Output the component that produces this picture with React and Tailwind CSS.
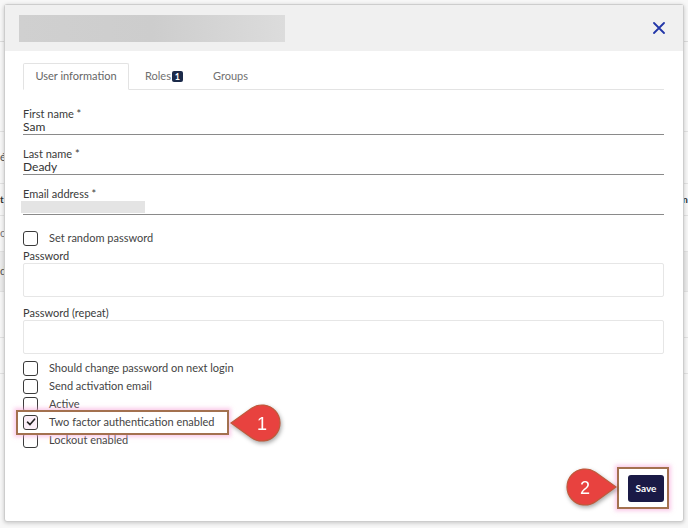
import { useState } from "react";

const font = { fontFamily: "Lato, 'Open Sans', sans-serif" };

const Field = ({ label, value, blurred }) => (
	<div className="flex flex-col h-[28px] border-b border-[#8a8a8a]">
		<span className="text-[11px] leading-[13px] text-[#3a3a3a]">{label}</span>
		{blurred ? (
			<div className="mt-[1px] -ml-[2px] h-[12px] w-[124px] bg-[#e4e4e4]" />
		) : (
			<span className="text-[12px] leading-[14px] text-[#333]">{value}</span>
		)}
	</div>
);

const Check = ({ label, checked }) => (
	<div className="flex items-center h-[18px]">
		<div className={`flex items-center justify-center w-[15px] h-[15px] rounded-[3px] border-[1.5px] border-[#3a3a3a] shrink-0 ${checked ? "bg-[#fbeef8]" : "bg-white"}`}>
			{checked && (
				<svg width="10" height="10" viewBox="0 0 10 10">
					<path d="M1.5 5.2 L4 7.6 L8.6 2.2" fill="none" stroke="#222" strokeWidth="1.6" strokeLinecap="round" strokeLinejoin="round" />
				</svg>
			)}
		</div>
		<span className="ml-[11px] text-[11px] text-[#444]">{label}</span>
	</div>
);

const Callout = ({ n, dir }) => (
	<svg width="72" height="44" viewBox="-36 -22 72 44" className="drop-shadow-[1px_2px_2px_rgba(0,0,0,0.35)]">
		{dir === "left" ? (
			<path d="M-31 0 L-10.45 -14.65 A18 18 0 1 1 -10.45 14.65 Z" fill="#e8423f" stroke="#c0593b" strokeWidth="1.2" />
		) : (
			<path d="M31 0 L10.45 -14.65 A18 18 0 1 0 10.45 14.65 Z" fill="#e8423f" stroke="#c0593b" strokeWidth="1.2" />
		)}
		<text x="0" y="6.5" textAnchor="middle" fontSize="18" fill="#fff" style={{ fontFamily: "'Liberation Sans', Arial, sans-serif" }}>{n}</text>
	</svg>
);

export default function App() {
	const [tab] = useState("info");

	return (
		<div className="relative w-[688px] h-[528px] overflow-hidden bg-[#f7f7f7]" style={font}>
			{/* background page */}
			<div className="flex flex-col">
				<div className="h-[42px] border-b border-[#dcdcdc]" />
				<div className="h-[90px] border-b border-[#e2e2e2]" />
				<div className="h-[52px] border-b border-[#e2e2e2] flex items-center justify-between text-[11px] text-[#555]"><span>é</span></div>
				<div className="h-[32px] border-b border-[#e2e2e2] flex items-center justify-between text-[10px] font-bold text-[#333]"><span>t</span><span>m</span></div>
				<div className="h-[36px] border-b border-[#e2e2e2] flex items-center text-[11px] text-[#777]"><span>c</span></div>
				<div className="h-[40px] border-b border-[#e2e2e2] bg-[#ececec] flex items-center text-[11px] text-[#555]"><span>d</span></div>
				<div className="h-[46px] border-b border-[#e2e2e2]" />
				<div className="h-[36px] border-b border-[#e2e2e2]" />
			</div>

			{/* modal */}
			<div className="absolute left-[4px] top-[4px] w-[680px] h-[518px] flex flex-col bg-white border border-[#cdcdcd] rounded-[3px] shadow-[0_1px_4px_rgba(0,0,0,0.2)]">
				<div className="h-[46px] shrink-0 bg-[#f0f0f0] flex items-center justify-between pl-[14px] pr-[18px]">
					<div className="h-[27px] w-[266px] bg-gradient-to-r from-[#d0d0d0] via-[#cdcdcd] to-[#dcdcdc]" />
					<svg width="12" height="12" viewBox="0 0 12 12">
						<path d="M1 1 L11 11 M11 1 L1 11" stroke="#2236a8" strokeWidth="1.8" strokeLinecap="round" />
					</svg>
				</div>

				<div className="flex flex-col flex-1 pl-[18px] pr-[19px] pt-[12px]">
					<div className="flex items-end h-[27px] border-b border-[#e3e3e3] text-[11px] text-[#707070]">
						<div className={`h-[27px] w-[106px] flex items-center justify-center -mb-[1px] bg-white border border-[#e3e3e3] border-b-white rounded-t-[2px] ${tab === "info" ? "text-[#666]" : ""}`}>User information</div>
						<div className="h-[26px] flex items-center ml-[16px]">
							<span>Roles</span>
							<span className="ml-[1px] w-[11px] h-[11px] rounded-[2px] bg-[#1b2a4a] text-white text-[9px] font-bold leading-[11px] text-center">1</span>
						</div>
						<div className="h-[26px] flex items-center ml-[30px]">Groups</div>
					</div>

					<div className="flex flex-col gap-[12px] mt-[17px]">
						<Field label="First name *" value="Sam" />
						<Field label="Last name *" value="Deady" />
						<Field label="Email address *" blurred />
					</div>

					<div className="mt-[14px]">
						<Check label="Set random password" />
					</div>

					<span className="mt-[2px] text-[11px] leading-[13px] text-[#3a3a3a]">Password</span>
					<div className="mt-[1px] h-[34px] border border-[#e6e6e6] rounded-[2px]" />
					<span className="mt-[9px] text-[11px] leading-[13px] text-[#3a3a3a]">Password (repeat)</span>
					<div className="mt-[1px] h-[34px] border border-[#e6e6e6] rounded-[2px]" />

					<div className="mt-[5px] flex flex-col">
						<Check label="Should change password on next login" />
						<Check label="Send activation email" />
						<Check label="Active" />
						<Check label="Two factor authentication enabled" checked />
						<Check label="Lockout enabled" />
					</div>

					<div className="mt-auto mb-[19px] flex justify-end">
						<button className="w-[36px] h-[27px] rounded-[3px] bg-[#1a1a46] text-white text-[10px] font-bold">Save</button>
					</div>
				</div>
			</div>

			{/* annotations */}
			<div className="absolute left-[16px] top-[410px] w-[213px] h-[25px] border-2 border-[#a3714f] shadow-[0_0_4px_2px_rgba(245,160,215,0.55)]" />
			<div className="absolute left-[226px] top-[401px]">
				<Callout n="1" dir="left" />
			</div>
			<div className="absolute left-[617px] top-[467px] w-[52px] h-[42px] border-2 border-[#a3714f] shadow-[0_0_4px_2px_rgba(245,160,215,0.55)]" />
			<div className="absolute left-[549px] top-[465px]">
				<Callout n="2" dir="right" />
			</div>
		</div>
	);
}
